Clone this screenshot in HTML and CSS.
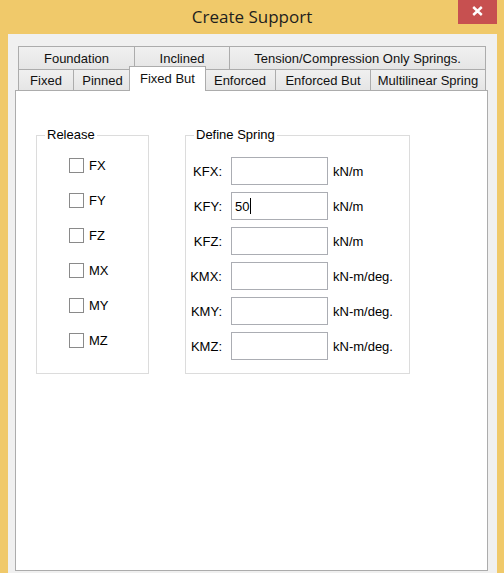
FILE: index.html
```html
<!DOCTYPE html>
<html>
<head>
<meta charset="utf-8">
<title>Create Support</title>
<link rel="stylesheet" href="styles.css">
</head>
<body>
<div class="window">
  <div class="titlebar">
    <div class="title">Create Support</div>
    <div class="close">
      <svg width="11" height="10" viewBox="0 0 11 10"><path d="M1.2 1 L9.8 9 M9.8 1 L1.2 9" stroke="#fff" stroke-width="2.4" stroke-linecap="butt"/></svg>
    </div>
  </div>
  <div class="client">
    <div class="tabs">
      <div class="tabrow">
        <div class="tab t-foundation">Foundation</div>
        <div class="tab t-inclined">Inclined</div>
        <div class="tab t-tension last">Tension/Compression Only Springs.</div>
      </div>
      <div class="tabrow">
        <div class="tab t-fixed">Fixed</div>
        <div class="tab t-pinned">Pinned</div>
        <div class="tab t-fixedbut selected">Fixed But</div>
        <div class="tab t-enforced">Enforced</div>
        <div class="tab t-enforcedbut">Enforced But</div>
        <div class="tab t-multi last">Multilinear Spring</div>
      </div>
    </div>
    <div class="page">
      <div class="group release">
        <div class="group-title">Release</div>
        <div class="check-list">
          <div class="check"><span class="box"></span><span>FX</span></div>
          <div class="check"><span class="box"></span><span>FY</span></div>
          <div class="check"><span class="box"></span><span>FZ</span></div>
          <div class="check"><span class="box"></span><span>MX</span></div>
          <div class="check"><span class="box"></span><span>MY</span></div>
          <div class="check"><span class="box"></span><span>MZ</span></div>
        </div>
      </div>
      <div class="group spring">
        <div class="group-title">Define Spring</div>
        <div class="field-list">
          <div class="field"><span class="flabel">KFX:</span><div class="textbox"></div><span class="unit">kN/m</span></div>
          <div class="field"><span class="flabel">KFY:</span><div class="textbox"><span>50</span><span class="caret"></span></div><span class="unit">kN/m</span></div>
          <div class="field"><span class="flabel">KFZ:</span><div class="textbox"></div><span class="unit">kN/m</span></div>
          <div class="field"><span class="flabel">KMX:</span><div class="textbox"></div><span class="unit">kN-m/deg.</span></div>
          <div class="field"><span class="flabel">KMY:</span><div class="textbox"></div><span class="unit">kN-m/deg.</span></div>
          <div class="field"><span class="flabel">KMZ:</span><div class="textbox"></div><span class="unit">kN-m/deg.</span></div>
        </div>
      </div>
    </div>
  </div>
</div>
</body>
</html>
```
FILE: styles.css
```css
* { box-sizing: border-box; }
html, body { margin: 0; padding: 0; }
body {
  background: #F0C96A;
  font-family: "Liberation Sans", Arial, sans-serif;
  font-size: 13px;
  color: #000;
  width: 504px;
  height: 573px;
  overflow: hidden;
}
.window { width: 504px; }
.titlebar {
  height: 34px;
  display: flex;
  align-items: flex-start;
  padding: 0 7px 0 46px;
}
.title {
  flex: 1;
  text-align: center;
  font-family: "Open Sans", "Noto Sans", sans-serif;
  font-size: 17px;
  line-height: 23px;
  padding-top: 5px;
  color: #1e1e1e;
}
.close {
  width: 39px;
  height: 24px;
  background: #C75050;
  display: flex;
  align-items: center;
  justify-content: center;
  padding-bottom: 3px;
}
.client {
  margin: 0 7px 0 8px;
  background: #F0F0F0;
  height: 560px;
  padding: 12px 0 0 7px;
}
.tabs { margin-left: 3px; width: 468px; }
.tabrow { display: flex; }
.tabrow:first-child .tab { height: 23px; }
.tab {
  height: 21px;
  border-top: 1px solid #ACACAC;
  border-left: 1px solid #ACACAC;
  background: linear-gradient(#F0F0F0, #E5E5E5);
  display: flex;
  align-items: center;
  justify-content: center;
  white-space: nowrap;
  color: #111;
}
.tab.last { border-right: 1px solid #ACACAC; }
.t-foundation { width: 116px; }
.t-inclined { width: 95px; }
.t-tension { width: 257px; }
.t-fixed { width: 55px; }
.t-pinned { width: 58px; }
.t-fixedbut { width: 73px; }
.t-enforced { width: 71px; }
.t-enforcedbut { width: 95px; }
.t-multi { width: 116px; }
.tab.selected {
  position: relative;
  z-index: 2;
  width: 77px;
  height: 25px;
  margin: -3px -2px -1px;
  background: #fff;
  border-right: 1px solid #ACACAC;
  padding-bottom: 1px;
}
.page {
  width: 473px;
  height: 481px;
  border: 1px solid #ACACAC;
  background: #fff;
  padding: 44px 0 0 20px;
  display: flex;
  align-items: flex-start;
  gap: 36px;
}
.group {
  position: relative;
  border: 1px solid #DCDCDC;
  height: 239px;
}
.group-title {
  position: absolute;
  top: -9px;
  left: 8px;
  padding: 0 2px;
  background: #fff;
  line-height: 16px;
}
.release { width: 113px; }
.check-list { padding: 12px 0 0 32px; }
.check {
  height: 35px;
  display: flex;
  align-items: center;
  gap: 5px;
}
.box {
  width: 15px;
  height: 15px;
  border: 1px solid #8A8A8A;
  background: #fff;
}
.spring { width: 225px; }
.field-list { padding: 21px 0 0 3px; }
.field {
  height: 28px;
  margin-bottom: 7px;
  display: flex;
  align-items: center;
}
.flabel {
  width: 33px;
  text-align: right;
  margin-right: 9px;
}
.textbox {
  width: 97px;
  height: 28px;
  border: 1px solid #ABADB3;
  background: #fff;
  padding-left: 3px;
  display: flex;
  align-items: center;
}
.caret {
  width: 1px;
  height: 16px;
  background: #000;
  margin-left: 1px;
}
.unit { margin-left: 5px; }
```
